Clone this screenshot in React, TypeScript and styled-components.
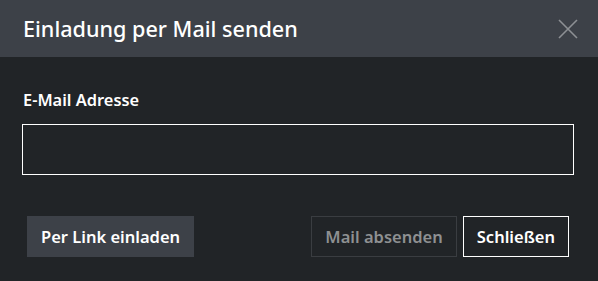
import React from "react";
import styled, { createGlobalStyle } from "styled-components";

const Global = createGlobalStyle`
  html, body { margin: 0; padding: 0; background: #212427; }
  body { font-family: "Noto Sans", "Open Sans", sans-serif; }
  * { box-sizing: border-box; }
`;

const Modal = styled.div`
  width: 598px;
  height: 281px;
  background: #212427;
  display: flex;
  flex-direction: column;
`;

const Header = styled.div`
  height: 57px;
  flex-shrink: 0;
  background: #3d4148;
  display: flex;
  align-items: center;
  justify-content: space-between;
  padding: 0 20px 0 23px;
`;

const Title = styled.h1`
  margin: 0;
  font-size: 21.6px;
  font-weight: 500;
  color: #ffffff;
  letter-spacing: 0;
`;

const CloseButton = styled.button`
  background: none;
  border: none;
  padding: 0;
  width: 21px;
  height: 21px;
  display: flex;
  align-items: center;
  justify-content: center;
  cursor: pointer;
`;

const Body = styled.div`
  padding: 32px 25px 0 22px;
  display: flex;
  flex-direction: column;
`;

const Label = styled.label`
  font-size: 16.4px;
  font-weight: 600;
  line-height: 22px;
  color: #ffffff;
  margin: 0 0 13px 1px;
`;

const Input = styled.input`
  width: 552px;
  height: 51px;
  background: transparent;
  border: 1px solid #ffffff;
  outline: none;
  color: #fff;
  font-family: inherit;
  font-size: 15px;
  padding: 0 12px;
`;

const Footer = styled.div`
  display: flex;
  align-items: center;
  padding: 41px 29px 0 27px;
`;

const Spacer = styled.div`
  flex: 1;
`;

const Button = styled.button<{ $variant: "filled" | "muted" | "outline" }>`
  height: 41px;
  font-family: inherit;
  font-size: 16.5px;
  font-weight: 600;
  padding: 0 13px;
  cursor: pointer;
  background: ${(p) => (p.$variant === "filled" ? "#3d4148" : "transparent")};
  color: ${(p) => (p.$variant === "muted" ? "#8e9092" : "#ffffff")};
  border: 1px solid
    ${(p) =>
      p.$variant === "filled"
        ? "#3d4148"
        : p.$variant === "muted"
        ? "#3a3d41"
        : "#ffffff"};
  & + & {
    margin-left: 6px;
  }
`;

export default function App() {
  return (
    <>
      <Global />
      <Modal>
        <Header>
          <Title>Einladung per Mail senden</Title>
          <CloseButton aria-label="Schließen">
            <svg width="20" height="20" viewBox="0 0 20 20">
              <path d="M1 1 L19 19 M19 1 L1 19" stroke="#8d9094" strokeWidth="1.6" />
            </svg>
          </CloseButton>
        </Header>
        <Body>
          <Label>E-Mail Adresse</Label>
          <Input type="email" />
        </Body>
        <Footer>
          <Button $variant="filled">Per Link einladen</Button>
          <Spacer />
          <Button $variant="muted">Mail absenden</Button>
          <Button $variant="outline">Schließen</Button>
        </Footer>
      </Modal>
    </>
  );
}
